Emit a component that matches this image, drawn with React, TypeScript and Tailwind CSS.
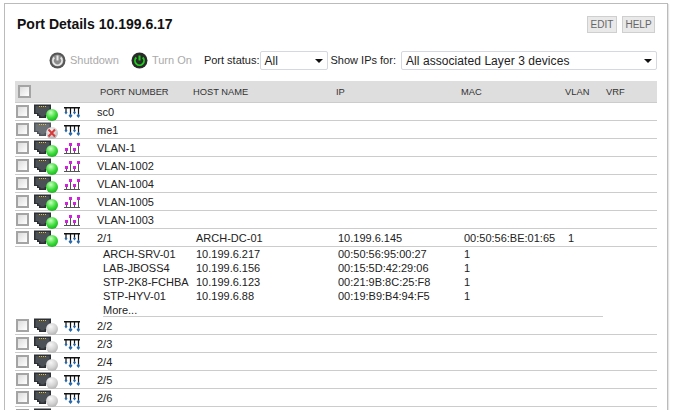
import React from "react";

type St = "up" | "down" | "err";

function PortIcon({ status }: { status: St }) {
  const id = `b-${status}`;
  const stops =
    status === "up"
      ? ["#c8ffc0", "#3ddc3a", "#12a81c"]
      : ["#f6f6f6", "#d4d4d4", "#acacac"];
  return (
    <svg width="26" height="17" viewBox="0 0 26 17" className="block">
      <defs>
        <radialGradient id={id} cx="0.4" cy="0.3" r="0.8">
          <stop offset="0" stopColor={stops[0]} />
          <stop offset="0.55" stopColor={stops[1]} />
          <stop offset="1" stopColor={stops[2]} />
        </radialGradient>
      </defs>
      <path d="M0 0.5h17v9.5h-3v2h-2v2H5v-2H3v-2H0z" fill={status === "err" ? "#4f545a" : "#2c3035"} />
      <path d="M1.5 2h14v7h-3v2h-2v1.5H6.500V11h-2V9h-3z" fill={status === "err" ? "#6c7178" : "#4b5056"} />
      <path d="M5 2.500h1M7 2.500h1M9 2.500h1M11 2.500h1" stroke="#e8c040" strokeWidth="1" />
      <circle cx="18" cy="11" r="6" fill={`url(#${id})`} />
      {status === "err" && (
        <path d="M14.500 7.500l6.500 7M21 7.500l-6.500 7" stroke="#d83a3a" strokeWidth="2" />
      )}
    </svg>
  );
}

function NetIcon({ vlan }: { vlan?: boolean }) {
  if (vlan) {
    return (
      <svg width="16" height="15" viewBox="0 0 16 15" className="block">
        <path d="M0 14.500h16M2.500 14V10M6.500 14V4M10.500 14V10M14.500 14V4" stroke="#555" strokeWidth="1" />
        <rect x="1" y="9" width="3" height="3" fill="#d41ee0" />
        <rect x="5" y="4" width="3" height="3" fill="#d41ee0" />
        <rect x="9" y="9" width="3" height="3" fill="#d41ee0" />
        <rect x="13" y="4" width="3" height="3" fill="#d41ee0" />
      </svg>
    );
  }
  return (
    <svg width="16" height="16" viewBox="0 0 16 16" className="block">
      <path d="M0 4.750h16" stroke="#111" strokeWidth="1.500" />
      <path d="M2 5v4M6.500 5v7M10.500 5v4M14.500 5v7" stroke="#111" strokeWidth="1.200" />
      <path d="M2 8l1.500 1.500L2 11.500.5 9.500z" fill="#2568ad" />
      <path d="M6.500 10.500l2 2.200-2 2.300-2-2.300z" fill="#2568ad" />
      <path d="M10.500 8L12 9.500l-1.500 2L9 9.500z" fill="#2568ad" />
      <path d="M14.500 10.500l1.500 2.200-1.500 2.300-2-2.300z" fill="#2568ad" />
    </svg>
  );
}

function PowerIcon({ on }: { on?: boolean }) {
  const c = on ? "#1fd21f" : "#e8e8e8";
  return (
    <svg width="17" height="17" viewBox="0 0 17 17" className="block">
      <circle cx="8.500" cy="8.500" r="8" fill={on ? "#2a2a2a" : "#555"} />
      {!on && <circle cx="8.500" cy="8.500" r="6" fill="#8c8c8c" />}
      <path d="M5.300 5.500a4.500 4.500 0 1 0 6.400 0" fill="none" stroke={c} strokeWidth="1.800" />
      <path d="M8.500 3.500v5" stroke={c} strokeWidth="2" />
    </svg>
  );
}

function Check() {
  return (
    <div className="h-[13px] w-[13px] border-2 border-[#a4a4a4] bg-gradient-to-br from-[#dcdcdc] to-white" />
  );
}

function Arrow() {
  return (
    <svg width="8" height="4" viewBox="0 0 8 4" className="block">
      <path d="M0 0h8L4 4z" fill="#111" />
    </svg>
  );
}

function Btn({ w, children }: { w: string; children: React.ReactNode }) {
  return (
    <div className={`flex h-[17px] items-center justify-center border border-[#cfcfcf] bg-[#e9e9e9] text-[10px] text-[#666] ${w}`}>
      {children}
    </div>
  );
}

function Select({ label, w }: { label: string; w: string }) {
  return (
    <div className={`flex h-[19px] items-center justify-between rounded-[2px] border border-[#d4d8e0] bg-white pl-[4px] pr-[4px] text-[12px] tracking-[0.07px] text-[#222] ${w}`}>
      <span>{label}</span>
      <Arrow />
    </div>
  );
}

const rowCols = "grid grid-cols-[19px_30px_33px_99px_142px_126px_104px_1fr]";

function Row({ name, status, vlan, host, ip, mac, v }: { name: string; status: St; vlan?: boolean; host?: string; ip?: string; mac?: string; v?: string }) {
  return (
    <div className={`${rowCols} h-[18px] border-b border-[#cccccc] text-[11px] leading-[19px] text-[#222]`}>
      <div className="pl-[1px] pt-[2px]"><Check /></div>
      <div className="pt-[1px]"><PortIcon status={status} /></div>
      <div><NetIcon vlan={vlan} /></div>
      <div>{name}</div>
      <div>{host}</div>
      <div>{ip}</div>
      <div>{mac}</div>
      <div>{v}</div>
    </div>
  );
}

const details = [
  ["ARCH-SRV-01", "10.199.6.217", "00:50:56:95:00:27", "1"],
  ["LAB-JBOSS4", "10.199.6.156", "00:15:5D:42:29:06", "1"],
  ["STP-2K8-FCHBA", "10.199.6.123", "00:21:9B:8C:25:F8", "1"],
  ["STP-HYV-01", "10.199.6.88", "00:19:B9:B4:94:F5", "1"],
];

export default function App() {
  return (
    <div className="h-[410px] w-[674px] overflow-hidden bg-white pl-[4px] pt-[3px] font-['Liberation_Sans',Arial,sans-serif]">
      <div className="h-[420px] w-[664px] border border-[#bbbbbb] pl-[10px] shadow-[1px_1px_1px_#e4e4e4]">
        <div className="flex h-[47px] items-start justify-between pr-[12px]">
          <h1 className="pl-[2px] pt-[11px] text-[14px] font-bold leading-[18px] text-[#111]">Port Details 10.199.6.17</h1>
          <div className="flex gap-[5px] pt-[12px]">
            <Btn w="w-[30px]">EDIT</Btn>
            <Btn w="w-[33px]">HELP</Btn>
          </div>
        </div>
        <div className="flex h-[19px] items-center pl-[34px] text-[11px]">
          <PowerIcon />
          <span className="ml-[4px] text-[#aaaaaa]">Shutdown</span>
          <span className="ml-[12px]"><PowerIcon on /></span>
          <span className="ml-[4px] text-[#aaaaaa]">Turn On</span>
          <span className="ml-[12px] text-[#222]">Port status:</span>
          <span className="ml-[0px]"><Select label="All" w="w-[68px]" /></span>
          <span className="ml-[3px] text-[#222]">Show IPs for:</span>
          <span className="ml-[5px]"><Select label="All associated Layer 3 devices" w="w-[256px]" /></span>
        </div>
        <div className="mt-[11px] w-[642px]">
          <div className="grid h-[22px] grid-cols-[85px_93px_143px_125px_104px_41px_1fr] border-b border-[#cccccc] bg-[#dedede] text-[9.330px] leading-[23px] text-[#333]">
            <div className="pl-[3px] pt-[4px]"><Check /></div>
            <div>PORT NUMBER</div>
            <div>HOST NAME</div>
            <div>IP</div>
            <div>MAC</div>
            <div>VLAN</div>
            <div>VRF</div>
          </div>
          <Row name="sc0" status="up" />
          <Row name="me1" status="err" />
          <Row name="VLAN-1" status="up" vlan />
          <Row name="VLAN-1002" status="up" vlan />
          <Row name="VLAN-1004" status="up" vlan />
          <Row name="VLAN-1005" status="up" vlan />
          <Row name="VLAN-1003" status="up" vlan />
          <div className="h-[88px]">
            <Row name="2/1" status="up" host="ARCH-DC-01" ip="10.199.6.145" mac="00:50:56:BE:01:65" v="1" />
            <div className="ml-[88px] mt-[-1px] flex h-[71px] w-[500px] flex-col border-b border-[#cccccc] pt-[1px] text-[11px] leading-[14px] text-[#222]">
              {details.map((d) => (
                <div key={d[0]} className="grid grid-cols-[93px_142px_126px_1fr]">
                  <div>{d[0]}</div>
                  <div>{d[1]}</div>
                  <div>{d[2]}</div>
                  <div>{d[3]}</div>
                </div>
              ))}
              <div>More...</div>
            </div>
          </div>
          {["2/2", "2/3", "2/4", "2/5", "2/6", ""].map((n) => (
            <Row key={n || "x"} name={n} status="down" />
          ))}
        </div>
      </div>
    </div>
  );
}
